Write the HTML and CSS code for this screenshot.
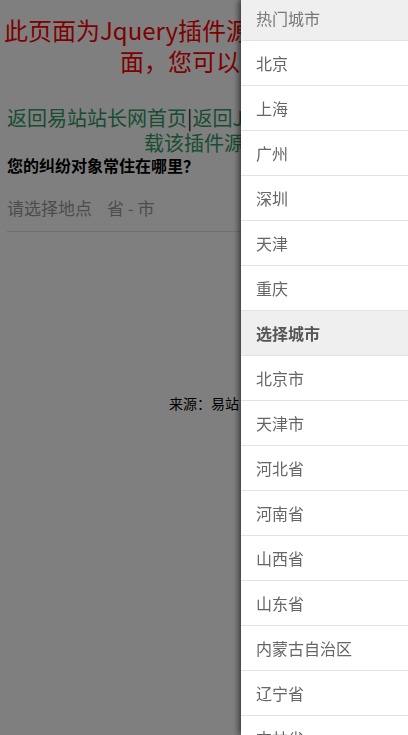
FILE: index.html
```html
<!DOCTYPE html>
<html lang="zh-CN">
<head>
    <meta charset="UTF-8">
    <title>城市选择</title>
    <link rel="stylesheet" href="styles.css">
</head>
<body>
    <div class="page">
        <h1 class="page-title">此页面为Jquery插件源码下载的演示页<br>面，您可以下载</h1>
        <div class="page-links">
            <a href="#">返回易站站长网首页</a>|<a href="#">返回Jquery插件页面，下<br>载该插件源码</a>
        </div>
        <div class="question">您的纠纷对象常住在哪里？</div>
        <div class="city-select">请选择地点<span class="city-value">省 - 市</span></div>
        <div class="source">来源：易站</div>
    </div>

    <div class="mask"></div>

    <div class="city-panel">
        <ul class="city-list">
            <li class="city-group">热门城市</li>
            <li>北京</li>
            <li>上海</li>
            <li>广州</li>
            <li>深圳</li>
            <li>天津</li>
            <li>重庆</li>
            <li class="city-group city-group-bold">选择城市</li>
            <li>北京市</li>
            <li>天津市</li>
            <li>河北省</li>
            <li>河南省</li>
            <li>山西省</li>
            <li>山东省</li>
            <li>内蒙古自治区</li>
            <li>辽宁省</li>
            <li>吉林省</li>
            <li>黑龙江省</li>
        </ul>
    </div>
</body>
</html>
```

FILE: styles.css
```css
body {
    margin: 0;
    background: #fff;
    color: #000;
    font-family: "Noto Sans CJK SC", "Noto Sans", sans-serif;
}
.page {
    overflow: hidden;
    height: 735px;
}
.page-title {
    margin: 14px 0 0;
    padding: 0 4px;
    font-size: 24px;
    font-weight: normal;
    line-height: 31px;
    color: #ff0000;
    text-align: center;
    white-space: nowrap;
}
.page-links {
    margin-top: 29px;
    padding: 0 7px;
    font-size: 20px;
    line-height: 25px;
    text-align: center;
    white-space: nowrap;
    color: #222;
}
.page-links a {
    color: #2f9a63;
    text-decoration: none;
}
.question {
    padding: 0 7px;
    font-size: 16px;
    font-weight: bold;
    line-height: 20px;
}
.city-select {
    margin: 0 7px;
    padding: 21px 0 11px;
    font-size: 17px;
    line-height: 24px;
    color: #999;
    border-bottom: 1px solid #ddd;
}
.city-value {
    margin-left: 15px;
}
.source {
    margin-top: 161px;
    font-size: 14px;
    line-height: 20px;
    text-align: center;
}
.mask {
    position: fixed;
    top: 0;
    right: 0;
    bottom: 0;
    left: 0;
    background: rgba(0, 0, 0, 0.5);
}
.city-panel {
    position: fixed;
    top: 0;
    right: 0;
    width: 167px;
    height: 100%;
    background: #fff;
    overflow: hidden;
    box-shadow: -2px 0 6px rgba(0, 0, 0, 0.6);
}
.city-list {
    list-style: none;
    margin: -4px 0 0;
    padding: 0;
}
.city-list li {
    height: 44px;
    padding-left: 15px;
    line-height: 44px;
    font-size: 16px;
    color: #666;
    border-bottom: 1px solid #e3e3e3;
}
.city-list .city-group {
    background: #efefef;
    color: #777;
}
.city-list .city-group-bold {
    font-weight: bold;
    color: #555;
}
```
